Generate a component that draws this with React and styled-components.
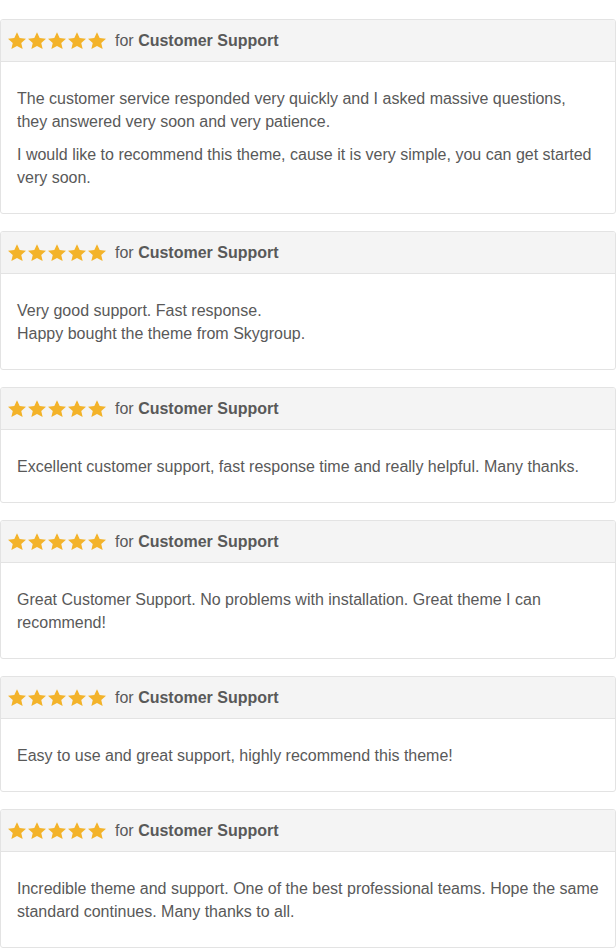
import React from 'react'
import styled, { createGlobalStyle } from 'styled-components'

const reviews = [
  {
    id: 1,
    paragraphs: [
      'The customer service responded very quickly and I asked massive questions, they answered very soon and very patience.',
      'I would like to recommend this theme, cause it is very simple, you can get started very soon.',
    ],
  },
  {
    id: 2,
    paragraphs: [['Very good support. Fast response.', 'Happy bought the theme from Skygroup.']],
  },
  {
    id: 3,
    paragraphs: ['Excellent customer support, fast response time and really helpful. Many thanks.'],
  },
  {
    id: 4,
    paragraphs: ['Great Customer Support. No problems with installation. Great theme I can recommend!'],
  },
  {
    id: 5,
    paragraphs: ['Easy to use and great support, highly recommend this theme!'],
  },
  {
    id: 6,
    paragraphs: ['Incredible theme and support. One of the best professional teams. Hope the same standard continues. Many thanks to all.'],
  },
]

function Star() {
  return (
    <svg width="18" height="18" viewBox="1 1 22 22">
      <path
        fill="#f3b32a"
        d="M12 1.2l3.3 7.1 7.7.8-5.8 5.2 1.7 7.6L12 18l-6.9 3.9 1.7-7.6L1 9.1l7.7-.8z"
      />
    </svg>
  )
}

function App() {
  return (
    <Page>
      <GlobalStyle />
      {reviews.map(r => (
        <Card key={r.id}>
          <Header>
            <Stars>
              {[0, 1, 2, 3, 4].map(i => <Star key={i} />)}
            </Stars>
            <Label>
              for <b>Customer Support</b>
            </Label>
          </Header>
          <Body>
            {r.paragraphs.map((p, i) => (
              <Text key={i}>
                {Array.isArray(p)
                  ? p.map((line, j) => (
                      <React.Fragment key={j}>
                        {j > 0 && <br />}
                        {line}
                      </React.Fragment>
                    ))
                  : p}
              </Text>
            ))}
          </Body>
        </Card>
      ))}
    </Page>
  )
}

export default App

const GlobalStyle = createGlobalStyle`
body{
  margin:0;
  background:#fff;
  font-family:"Liberation Sans", Arial, sans-serif;
}
`
const Page = styled.div`
width:616px;
padding-top:19px;
display:flex;
flex-direction:column;
row-gap:17px;
`
const Card = styled.div`
border:1px solid #e3e3e3;
border-radius:3px;
background:#fff;
overflow:hidden;
`
const Header = styled.div`
height:41px;
display:flex;
align-items:center;
column-gap:9px;
padding:0 0 0 7px;
background:#f4f4f4;
border-bottom:1px solid #e3e3e3;
`
const Stars = styled.div`
display:flex;
column-gap:2px;
svg{
  display:block;
}
`
const Label = styled.span`
color:#595959;
font-size:16px;
b{
  font-weight:700;
}
`
const Body = styled.div`
padding:25px 16px 24px;
display:flex;
flex-direction:column;
row-gap:10px;
`
const Text = styled.p`
margin:0;
color:#595959;
font-size:16px;
line-height:23px;
`
